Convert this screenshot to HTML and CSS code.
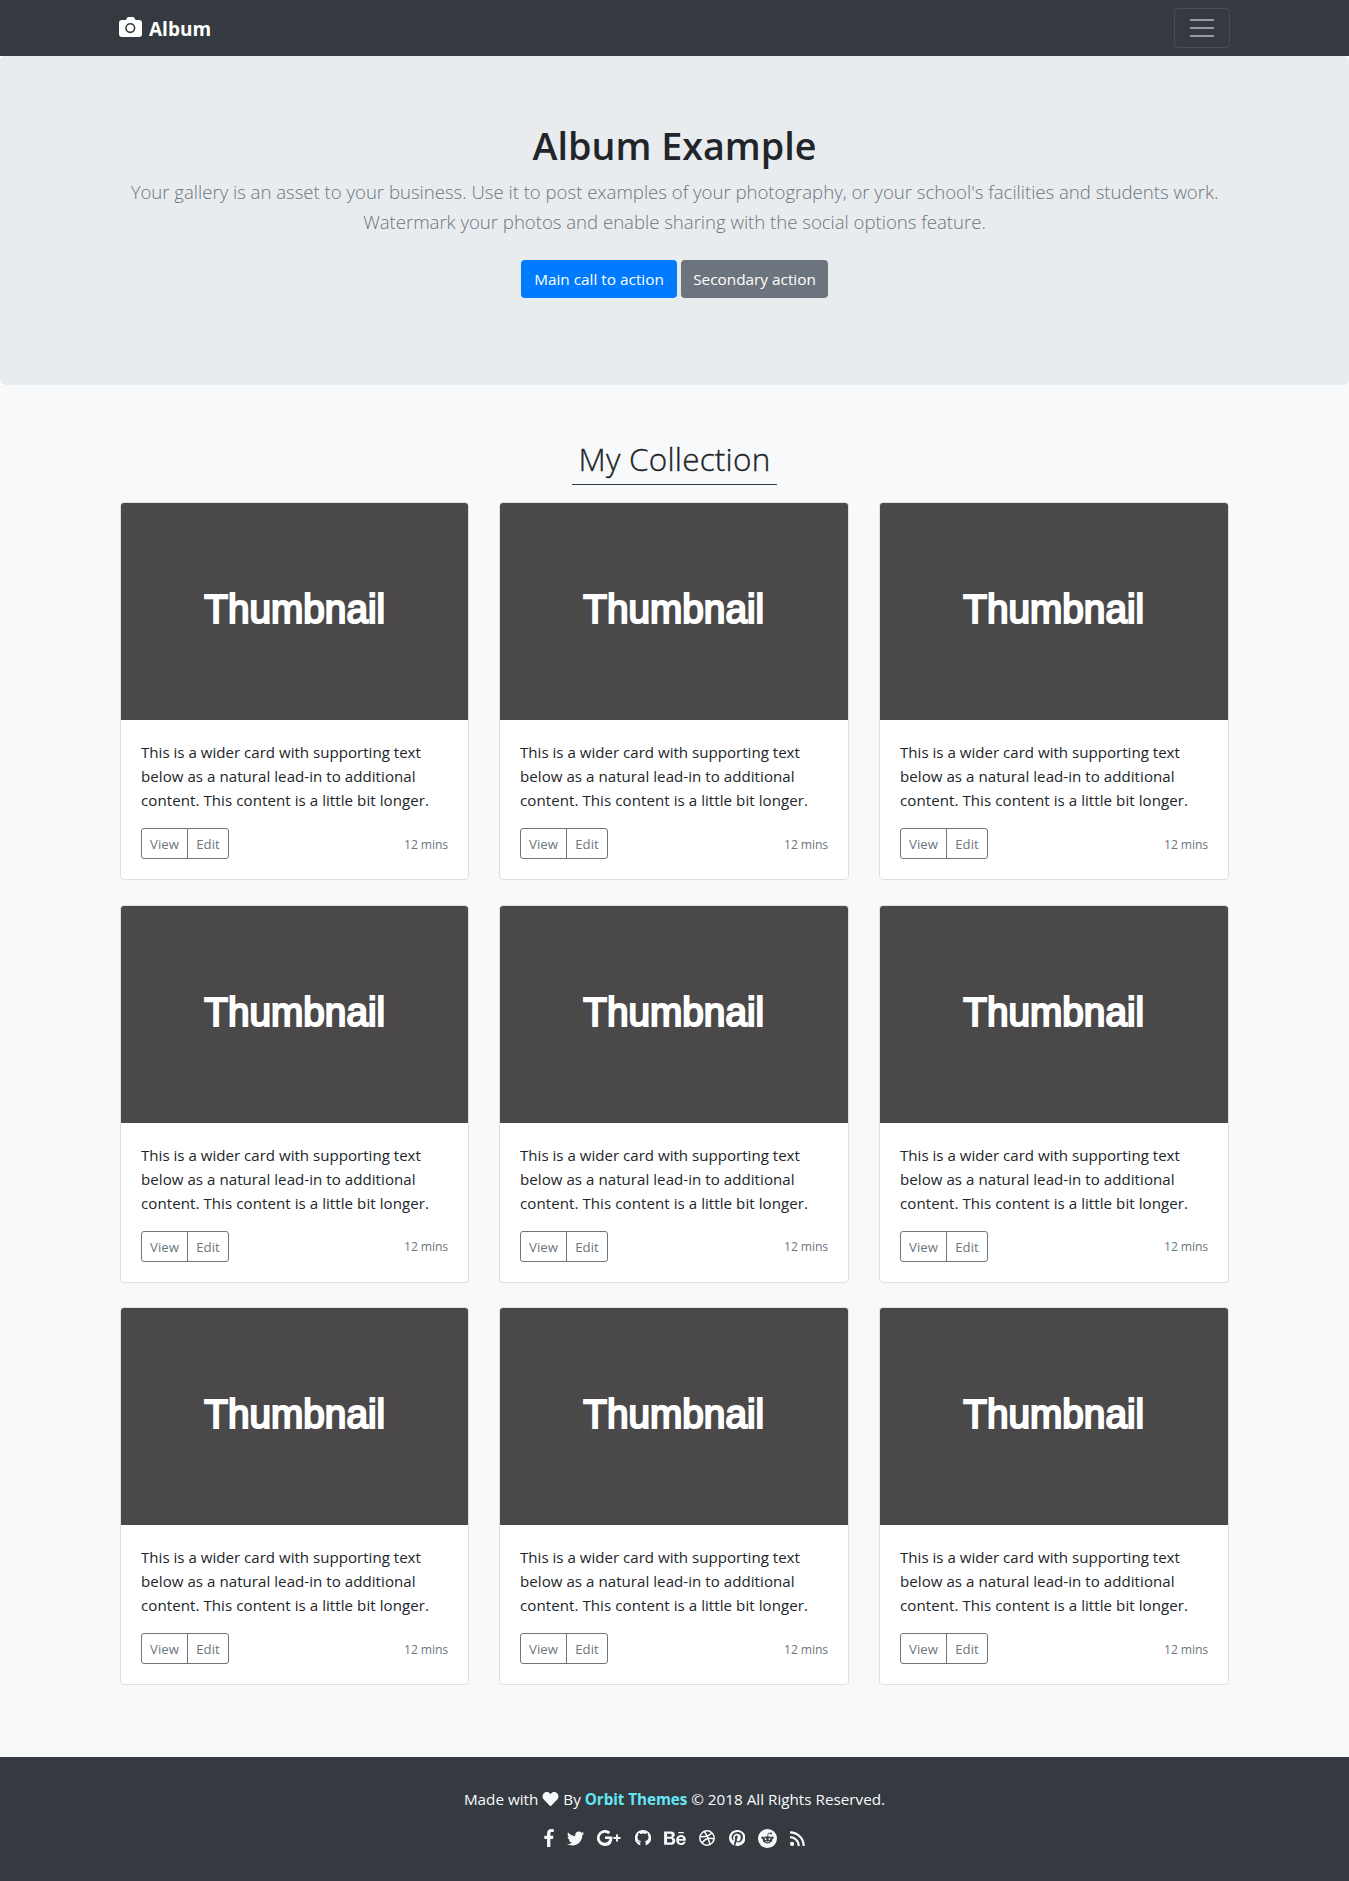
FILE: index.html
```html
<!DOCTYPE html>
<html lang="en">
<head>
<meta charset="utf-8">
<title>Album Example</title>
<link rel="stylesheet" href="styles.css">
</head>
<body>
<header class="navbar">
  <div class="container navbar-inner">
    <a class="brand"><svg class="camera" viewBox="0 0 23 20"><path fill="currentColor" fill-rule="evenodd" d="M3 3h4l1-2q.4-1 1.500-1h4.500q1 0 1.500 1l1 2h3.500q3 0 3 3v11q0 3-3 3H3q-3 0-3-3V6q0-3 3-3zM11.300 6a5 5 0 1 0 0 10.200 5 5 0 0 0 0-10.200zM11.300 7.600a3.500 3.500 0 1 1 0 7 3.500 3.500 0 0 1 0-7z"/></svg><span>Album</span></a>
    <button class="toggler" aria-label="Menu"><i></i><i></i><i></i></button>
  </div>
</header>
<section class="jumbotron">
  <h1>Album Example</h1>
  <p class="lead">Your gallery is an asset to your business. Use it to post examples of your photography, or your school's facilities and students work.<br>Watermark your photos and enable sharing with the social options feature.</p>
  <div class="actions"><a class="btn primary">Main call to action</a><a class="btn secondary">Secondary action</a></div>
</section>
<main class="album">
  <h2>My Collection</h2>
  <div class="cards" id="cards"></div>
</main>
<footer class="footer">
  <p>Made with <svg class="heart" viewBox="0 0 512 512"><path fill="currentColor" d="M462 62c-55-46-136-38-186 14l-20 20-20-20C186 24 105 16 50 62c-63 54-66 150-10 208l193 200c13 13 33 13 46 0l193-200c56-58 53-154-10-208z"/></svg> By <b>Orbit Themes</b> © 2018 All Rights Reserved.</p>
  <div class="social">
    <svg width="10" height="18" viewBox="0 0 264 512"><path d="M77 512V286H0v-91h77v-70C77 44 125 0 196 0c34 0 63 3 71 4v82h-50c-39 0-46 18-46 45v64h88l-12 91h-76v226"/></svg>
    <svg width="17" height="17" viewBox="0 0 512 512"><path d="M459 152c.3 4.500.3 9 .3 14C459 304 354 464 161 464c-59 0-115-17-161-47 69 8 129-14 155-36-46-1-84-31-98-73 17 3 30 3 47-1-48-10-84-52-84-104 15 9 31 13 48 14C20 184 6 128 32 78c52 64 129 105 216 110C232 112 290 48 358 48c30 0 58 13 77 33 24-5 46-13 66-25-8 24-24 45-46 58 21-2 41-8 60-16-14 21-32 39-56 54z"/></svg>
    <svg width="24" height="16" viewBox="0 0 24 16"><path d="M8 6.500h7.400Q16 16 8 16A8 8 0 1 1 13.400 2.100l-2.200 2.200A5 5 0 1 0 12.500 9H8zM19 4.500h2V7h2.500v2H21v2.500h-2V9h-2.500V7H19z"/></svg>
    <svg width="16" height="16" viewBox="0 0 16 16"><path d="M8 0a8 8 0 0 0-2.700 15.600V12.400C3.500 12.700 3 12 2.600 11c.8 0 1.100.9 1.600 1.100.4.200 1 .1 1.300-.1.100-.5.300-.8.500-1-2-.2-3.500-1-3.500-3.700 0-1 .3-1.600.8-2.200-.2-.7-.2-1.400.1-2.100.9 0 1.700.6 2.200.9a8 8 0 0 1 4.800 0c.5-.3 1.300-.9 2.200-.9.300.7.300 1.400.1 2.100.5.600.8 1.200.8 2.200 0 2.700-1.500 3.500-3.500 3.700.4.300.7 1 .7 1.800v2.800A8 8 0 0 0 8 0z"/></svg>
    <svg width="22" height="14" viewBox="0 0 576 370"><path fill-rule="evenodd" d="M232 174c32-15 49-38 49-74C281 28 228 11 166 11H0v354h171c64 0 124-31 124-102 0-44-21-76-63-89zM78 71h72c28 0 53 8 53 41 0 31-20 43-49 43H78zm83 233H78v-97h85c34 0 56 14 56 51s-26 46-58 46zM519 61H376V26h143zm57 182c0-76-45-140-125-140-78 0-131 59-131 136 0 80 50 134 131 134 61 0 101-28 120-86h-62c-7 22-34 34-56 34-42 0-64-25-64-66h187zm-187-32c2-34 25-55 59-55 36 0 53 21 56 55z"/></svg>
    <svg width="16" height="16" viewBox="0 0 16 16"><g fill="none" stroke="#f8f9fa" stroke-width="1.500"><circle cx="8" cy="8" r="7.200"/><path d="M5.300 1.300Q9.500 7 11 14.500M1 6.600Q9 7.500 13 2.800M3 13.200Q7 6.500 15 8.700"/></g></svg>
    <svg width="16" height="16" viewBox="0 0 16 16"><path fill-rule="evenodd" d="M8 0a8 8 0 0 0-3 15.400c0-.7 0-1.500.2-2.200l1-4.300s-.3-.5-.3-1.300c0-1.200.7-2.100 1.600-2.100.8 0 1.100.6 1.100 1.300 0 .8-.5 2-.8 3-.2.900.5 1.600 1.300 1.600 1.600 0 2.700-2.100 2.700-4.500 0-1.900-1.300-3.200-3.500-3.200-2.600 0-4.200 1.900-4.200 4 0 .7.200 1.200.6 1.600l-.3 1.100C3.300 9.900 2.600 8.700 2.600 7.400c0-2.500 2.100-5.400 6-5.400 3.200 0 5.300 2.300 5.300 4.800 0 3.300-1.800 5.700-4.500 5.700-.9 0-1.700-.5-2-1l-.6 2.300c-.2.700-.5 1.300-.8 1.800A8 8 0 1 0 8 0z"/></svg>
    <svg width="19" height="19" viewBox="0 0 19 19"><circle cx="9.500" cy="9.500" r="9.500"/><g fill="#343a40"><ellipse cx="9.500" cy="10.800" rx="4.800" ry="3.600"/><circle cx="4.600" cy="8.800" r="1.300"/><circle cx="14.400" cy="8.800" r="1.300"/><circle cx="13" cy="4.500" r="1"/></g><path d="M9.500 7.500l.8-3.500 2.500.5" fill="none" stroke="#343a40" stroke-width=".7"/><circle cx="7.600" cy="10" r=".9"/><circle cx="11.400" cy="10" r=".9"/><path d="M7.400 12.200q2.100 1.300 4.200 0" fill="none" stroke="#f8f9fa" stroke-width=".8"/></svg>
    <svg width="15" height="15" viewBox="0 0 15 15"><circle cx="2.100" cy="12.900" r="2.100"/><path fill="none" stroke="#f8f9fa" stroke-width="2.200" d="M0 6.200A8.800 8.800 0 0 1 8.800 15M0 1.300A13.700 13.700 0 0 1 13.700 15"/></svg>
  </div>
</footer>
<script src="cards.js"></script>
</body>
</html>
```
FILE: cards.js
```js
const card = `<article class="card">
  <div class="thumb"><span>Thumbnail</span></div>
  <div class="card-body">
    <p><span class="t1">This is a wider card with supporting text</span><br><span class="t2">below as a natural lead-in to additional</span><br><span class="t3">content. This content is a little bit longer.</span></p>
    <div class="card-foot"><div class="group"><button>View</button><button>Edit</button></div><small>12 mins</small></div>
  </div>
</article>`;
document.getElementById('cards').innerHTML = card.repeat(9);
```
FILE: styles.css
```css
* { box-sizing: border-box; }
body { margin: 0; background: #fff; color: #212529; font: 15.100px/24px "Open Sans", "Noto Sans", sans-serif; }
h1, h2, p { margin: 0; white-space: nowrap; }
.container { width: 1111px; margin: 0 auto; }
.navbar { height: 56px; background: #343a40; }
.navbar-inner { display: flex; justify-content: space-between; align-items: center; height: 56px; }
.brand { display: flex; align-items: center; gap: 7px; color: #fff; font-size: 19px; font-weight: 700; }
.brand span { padding-top: 2px; }
.camera { width: 23px; height: 20px; margin-top: -2px; }
.toggler { width: 56px; height: 40px; padding: 0; border: 1px solid #484e53; border-radius: 4px; background: none; display: flex; flex-direction: column; align-items: center; justify-content: center; gap: 6px; }
.toggler i { width: 24px; height: 2px; background: #999c9f; }
.jumbotron { height: 329px; padding: 66px 0 0; text-align: center; background: #e9ecef; border-radius: 5px; }
h1 { font-size: 37.700px; line-height: 48px; font-weight: 600; }
.lead { margin-top: 7px; font-size: 18.600px; line-height: 30px; font-weight: 300; letter-spacing: -.015px; color: #6c757d; }
.actions { display: flex; justify-content: center; gap: 4px; margin-top: 23px; font-size: 15.350px; }
.btn { height: 38px; padding: 7px 0; border-radius: 4px; color: #fff; }
.primary { width: 156px; background: #007bff; }
.secondary { width: 147px; background: #6c757d; }
.album { height: 1372px; padding-top: 48px; background: #f8f9fa; }
h2 { width: 205px; height: 52px; margin: 0 auto 17px; padding-top: 7px; border-bottom: 1px solid #343a40; font-size: 31.500px; line-height: 38px; font-weight: 300; letter-spacing: .22px; -webkit-text-stroke: .35px #212529; text-align: center; }
.cards { display: grid; grid-template-columns: 349px 350px 350px; justify-content: center; column-gap: 30px; row-gap: 24.500px; }
.card { height: 378px; background: #fff; border: 1px solid #dfdfdf; border-radius: 4px; overflow: hidden; }
.thumb { height: 217px; background: #4a4848; color: #fff; display: flex; justify-content: center; align-items: center; padding-bottom: 4px; font: 41px/1 "Liberation Sans", Arial, sans-serif; -webkit-text-stroke: 2.200px #fff; }
.thumb span { transform: scaleX(.945); }
.card-body { padding: 20px; }
.t2 { letter-spacing: .036px; }
.t3 { letter-spacing: .055px; }
.card-foot { display: flex; justify-content: space-between; align-items: center; margin-top: 16px; color: #6c757d; }
.group { display: flex; border: 1px solid #6c757d; border-radius: 3px; height: 31px; }
.group button { font: 13.200px/21px "Open Sans", sans-serif; color: #6c757d; background: none; border: 0; padding: 2px 0 0; width: 40px; }
.group button:first-child { width: 46px; border-right: 1px solid #6c757d; }
small { padding-top: 2px; font-size: 12.200px; letter-spacing: -.12px; }
.footer { height: 124px; padding-top: 30px; background: #343a40; color: #f8f9fa; font-size: 15.250px; text-align: center; }
.footer b { color: #66e5f5; letter-spacing: -.08px; }
.heart { width: 17px; height: 16px; vertical-align: -2px; }
.social { display: flex; justify-content: center; align-items: center; gap: 13.300px; margin-top: 15px; height: 24px; fill: #f8f9fa; }
```
